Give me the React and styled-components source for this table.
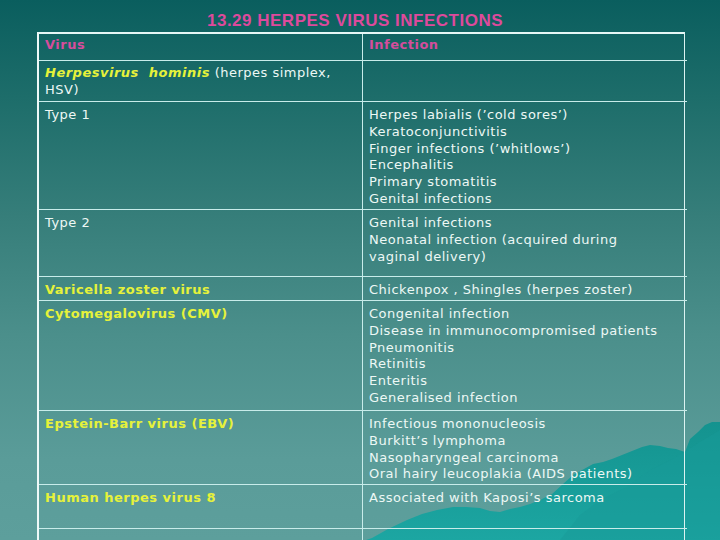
import React from "react";
import styled, { createGlobalStyle } from "styled-components";

const Global = createGlobalStyle`
  html, body { margin: 0; padding: 0; }
  body { background: #0b5f5f; }
`;

const Page = styled.div`
  position: relative;
  width: 720px;
  height: 540px;
  overflow: hidden;
  background: linear-gradient(180deg, #0a5e5e 0%, #1d6d6a 18%, #367e7a 40%, #4b8f8b 62%, #5a9c99 85%, #5d9f9c 100%);
  font-family: "DejaVu Sans", Verdana, sans-serif;
`;

const Mountain = styled.svg`
  position: absolute;
  left: 0;
  top: 0;
  width: 720px;
  height: 540px;
  pointer-events: none;
`;

const Content = styled.div`
  position: relative;
  display: flex;
  flex-direction: column;
`;

const Title = styled.h1`
  margin: 0;
  height: 32px;
  box-sizing: border-box;
  padding: 12px 10px 0 0;
  text-align: center;
  font-family: "Liberation Sans", Arial, sans-serif;
  font-weight: bold;
  font-size: 17px;
  letter-spacing: 0.5px;
  line-height: 18px;
  color: #dd4a9c;
`;

const Table = styled.div`
  margin-left: 37px;
  width: 648px;
  box-sizing: border-box;
  display: grid;
  grid-template-columns: 324px 324px;
  border-top: 2px solid #e6f7f6;
  border-left: 2px solid #eef9f8;
  border-right: 1.5px solid #dcf3f2;
`;

const Cell = styled.div`
  box-sizing: border-box;
  height: ${(p) => p.$h}px;
  padding: ${(p) => p.$pt}px 6px 0 6px;
  border-bottom: 1px solid #c8ecea;
  border-right: ${(p) => (p.$left ? "1px solid #c8ecea" : "none")};
  font-size: 13px;
  letter-spacing: 0.5px;
  line-height: 16.8px;
  color: #edf8f5;
  white-space: nowrap;
`;

const Head = styled.span`
  color: #d54d9c;
  font-weight: bold;
`;

const Virus = styled.span`
  color: #e6f23a;
  font-weight: bold;
  font-style: ${(p) => (p.$italic ? "italic" : "normal")};
`;

const Line = styled.div``;

const rows = [
  { h: 27, pt: 3, left: <Head>Virus</Head>, right: [<Head key="i">Infection</Head>] },
  {
    h: 41,
    pt: 4,
    left: (
      <>
        <Virus $italic>Herpesvirus&nbsp; hominis</Virus> (herpes simplex,
        <br />
        HSV)
      </>
    ),
    right: [],
  },
  {
    h: 108,
    left: "Type 1",
    right: [
      "Herpes labialis (\u2019cold sores\u2019)",
      "Keratoconjunctivitis",
      "Finger infections (\u2019whitlows\u2019)",
      "Encephalitis",
      "Primary stomatitis",
      "Genital infections",
    ],
  },
  {
    h: 67,
    left: "Type 2",
    right: ["Genital infections", "Neonatal infection (acquired during", "vaginal delivery)"],
  },
  { h: 24, left: <Virus>Varicella zoster virus</Virus>, right: ["Chickenpox , Shingles (herpes zoster)"] },
  {
    h: 110,
    left: <Virus>Cytomegalovirus (CMV)</Virus>,
    right: [
      "Congenital infection",
      "Disease in immunocompromised patients",
      "Pneumonitis",
      "Retinitis",
      "Enteritis",
      "Generalised infection",
    ],
  },
  {
    h: 74,
    left: <Virus>Epstein-Barr virus (EBV)</Virus>,
    right: [
      "Infectious mononucleosis",
      "Burkitt\u2019s lymphoma",
      "Nasopharyngeal carcinoma",
      "Oral hairy leucoplakia (AIDS patients)",
    ],
  },
  { h: 44, left: <Virus>Human herpes virus 8</Virus>, right: ["Associated with Kaposi\u2019s sarcoma"] },
  { h: 40, left: "", right: [] },
];

export default function App() {
  return (
    <>
      <Global />
      <Page>
        <Mountain viewBox="0 0 720 540">
          <defs>
            <linearGradient id="mg" x1="0" y1="0" x2="0" y2="1">
              <stop offset="0" stopColor="#14938f" />
              <stop offset="1" stopColor="#1ca6a2" />
            </linearGradient>
          </defs>
          <path
            d="M366 540 L372 538 L388 529 L407 520 L422 514 L437 510 L453 507 L466 507 L480 508 L490 511 L500 512 L510 509 L520 507 L530 504 L540 500 L552 494 L563 484 L573 475 L584 469 L593 464 L603 462 L612 459 L622 455 L632 451 L642 447 L650 445 L660 446 L668 448 L676 449 L685 452 L690 439 L698 432 L705 425 L712 422 L720 422 L720 540 Z"
            fill="url(#mg)"
          />
          <path
            d="M560 540 L580 515 L600 500 L625 488 L650 470 L675 458 L700 442 L720 430 L720 540 Z"
            fill="#189a97"
            opacity="0.5"
          />
        </Mountain>
        <Content>
          <Title>13.29 HERPES VIRUS INFECTIONS</Title>
          <Table>
            {rows.map((r, i) => (
              <React.Fragment key={i}>
                <Cell $h={r.h} $pt={r.pt ?? 5} $left>
                  {r.left}
                </Cell>
                <Cell $h={r.h} $pt={r.pt ?? 5}>
                  {r.right.map((t, j) => (
                    <Line key={j}>{t}</Line>
                  ))}
                </Cell>
              </React.Fragment>
            ))}
          </Table>
        </Content>
      </Page>
    </>
  );
}
